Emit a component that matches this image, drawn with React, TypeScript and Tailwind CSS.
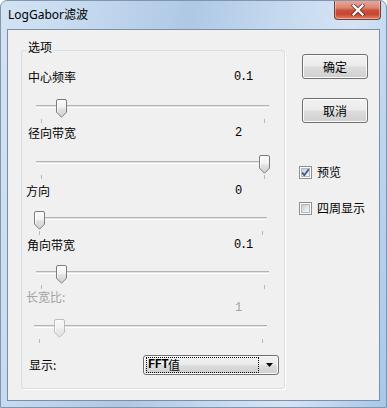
import React from "react";

const CJK = "font-['Noto_Sans_CJK_SC',sans-serif]";
const MONO = "font-['Liberation_Mono',monospace]";

function Thumb({ disabled }: { disabled?: boolean }) {
  const id = disabled ? "thumb-d" : "thumb-n";
  return (
    <svg width="11" height="19" viewBox="0 0 11 19">
      <defs>
        <linearGradient id={id} x1="0" y1="0" x2="0" y2="1">
          <stop offset="0" stopColor={disabled ? "#fafafa" : "#fdfdfd"} />
          <stop offset="0.45" stopColor={disabled ? "#f2f2f2" : "#f1f1f1"} />
          <stop offset="0.55" stopColor={disabled ? "#e9e9e9" : "#e0e0e0"} />
          <stop offset="1" stopColor={disabled ? "#e4e4e4" : "#d3d3d3"} />
        </linearGradient>
      </defs>
      <path
        d="M2 0.5 H9 Q10.5 0.5 10.5 2 V13.2 L5.5 18.2 L0.5 13.2 V2 Q0.5 0.5 2 0.5 Z"
        fill={`url(#${id})`}
        stroke={disabled ? "#bdbdbd" : "#7c7c7c"}
      />
      <path d="M1.5 2 V12.8" stroke="#ffffff" strokeOpacity="0.8" />
    </svg>
  );
}

type Sec = {
  label: string;
  value: string;
  pos: number;
  base: number;
  labelCls: string;
  mtCls: string;
  gapCls: string;
  trackCls: string;
  valueCls: string;
  disabled?: boolean;
};

const sections: Sec[] = [
  { label: "中心频率", value: "0.1", pos: 20 / 223, base: 14, labelCls: "pl-[6px]", mtCls: "mt-[18px]", gapCls: "mt-[14px]", trackCls: "ml-[14px]", valueCls: "" },
  { label: "径向带宽", value: "2", pos: 1, base: 14, labelCls: "pl-[6px]", mtCls: "mt-[2px]", gapCls: "mt-[14px]", trackCls: "ml-[14px]", valueCls: "pl-[1px]" },
  { label: "方向", value: "0", pos: 0, base: 12, labelCls: "pl-[4px]", mtCls: "mt-[4px]", gapCls: "mt-[12px]", trackCls: "ml-[12px]", valueCls: "pl-[1px]" },
  { label: "角向带宽", value: "0.1", pos: 20 / 223, base: 14, labelCls: "pl-[5px]", mtCls: "mt-[2px]", gapCls: "mt-[12px]", trackCls: "ml-[14px]", valueCls: "" },
  { label: "长宽比:", value: "1", pos: 20 / 223, base: 12, labelCls: "pl-[4px]", mtCls: "mt-0", gapCls: "mt-[14px]", trackCls: "ml-[12px]", valueCls: "mt-[11px] pl-[1px]", disabled: true },
];

function SliderSection({ s }: { s: Sec }) {
  const color = s.disabled ? "text-[#a3a3a3]" : "text-black";
  return (
    <div className="flex flex-col">
      <div className={`flex h-[16px] items-start ${s.mtCls} ${color}`}>
        <span className={`w-[212px] text-[12px] leading-[16px] ${CJK} ${s.labelCls}`}>{s.label}</span>
        <span className={`text-[12px] leading-[16px] tracking-[-1.2px] ${MONO} ${s.valueCls}`}>{s.value}</span>
      </div>
      <div className={`relative h-[24px] ${s.gapCls}`}>
        <div className={`mt-[6px] h-[3px] w-[233px] border-t border-b border-t-[#b3b3b3] border-b-white bg-[#e3e3e3] ${s.trackCls}`} />
        <div className="absolute top-0" style={{ left: s.base + Math.round(s.pos * 223) }}>
          <Thumb disabled={s.disabled} />
        </div>
        <div className="absolute top-[20px] h-[4px] w-px bg-[#b9b9b9]" style={{ left: s.base + 5 }} />
        <div className="absolute top-[20px] h-[4px] w-px bg-[#b9b9b9]" style={{ left: s.base + 5 + 223 }} />
      </div>
    </div>
  );
}

function Button({ label, cls }: { label: string; cls: string }) {
  return (
    <div
      className={`ml-[3px] flex h-[25px] w-[66px] items-center justify-center rounded-[3px] border border-[#707070] bg-[linear-gradient(to_bottom,#f2f2f2_0%,#ebebeb_48%,#dddddd_52%,#cfcfcf_100%)] shadow-[inset_0_0_0_1px_#fbfbfb] text-[12px] leading-[16px] text-black ${CJK} ${cls}`}
    >
      {label}
    </div>
  );
}

function Checkbox({ checked, label, cls }: { checked?: boolean; label: string; cls: string }) {
  return (
    <div className={`flex items-center gap-[5px] ${cls}`}>
      <div className="relative flex h-[13px] w-[13px] items-center justify-center border border-[#8e8f8f] bg-white">
        <div className="h-[9px] w-[9px] border border-[#b4b7bb] bg-[linear-gradient(135deg,#c9ccd1_0%,#e4e5e7_55%,#f7f7f7_100%)]" />
        {checked && (
          <svg className="absolute left-[1px] top-[1px]" width="9" height="9" viewBox="0 0 9 9">
            <path d="M1.2 4.6 L3.3 7.2 L7.8 1.2" fill="none" stroke="#3d5796" strokeWidth="1.8" strokeLinejoin="round" />
          </svg>
        )}
      </div>
      <span className={`text-[12px] leading-[16px] text-black ${CJK}`}>{label}</span>
    </div>
  );
}

function CloseButton() {
  return (
    <div className="-mr-px -mt-px flex h-[20px] w-[47px] items-center justify-center rounded-b-[4px] border border-t-0 border-[#7a3d34] bg-[linear-gradient(to_bottom,#e9ab9d_0%,#dc8775_40%,#c9503a_55%,#c7452e_75%,#e0846c_100%)] shadow-[inset_0_0_0_1px_rgba(255,220,210,0.45)]">
      <svg width="14" height="12" viewBox="0 0 14 12">
        <path d="M2.5 1.5 L11.5 10.5 M11.5 1.5 L2.5 10.5" stroke="#5a2a23" strokeWidth="4" strokeLinecap="square" opacity="0.75" />
        <path d="M2.5 1.5 L11.5 10.5 M11.5 1.5 L2.5 10.5" stroke="#ffffff" strokeWidth="2.2" strokeLinecap="square" />
      </svg>
    </div>
  );
}

export default function App() {
  return (
    <div className="flex h-[408px] w-[387px] flex-col overflow-hidden rounded-t-[7px] border border-[#8196ad] bg-[linear-gradient(100deg,#d3e3f4_0%,#c2d7ee_22%,#aec8e5_42%,#c3d8ee_60%,#d5e4f4_78%,#a6c7eb_100%)] px-[6px] pb-[6px]">
      <div className="flex h-[28px] items-start justify-between">
        <span className={`mt-[6px] pl-[1px] text-[12px] leading-[16px] text-black font-['Noto_Sans','Noto_Sans_CJK_SC',sans-serif]`}>
          LogGabor滤波
        </span>
        <CloseButton />
      </div>
      <div className="flex h-[372px] w-[373px] border border-[#7d8fa4] bg-[#f0f0f0]">
        <div className="relative ml-[13px] mt-[20px] flex h-[339px] w-[264px] flex-col rounded-[3px] border border-[#d5dfe5] shadow-[1px_1px_0_#ffffff]">
          <span className={`absolute left-[5px] top-[-12px] bg-[#f0f0f0] px-px text-[12px] leading-[16px] text-black ${CJK}`}>
            选项
          </span>
          {sections.map((s) => (
            <SliderSection key={s.label} s={s} />
          ))}
          <div className="mt-[12px] flex h-[20px] items-center pl-[7px]">
            <span className={`text-[12px] leading-[16px] text-black ${CJK}`}>显示:</span>
            <div className="ml-auto mr-[5px] flex h-[20px] w-[136px] items-center rounded-[3px] border border-[#707070] bg-[linear-gradient(to_bottom,#f2f2f2_0%,#ebebeb_48%,#dddddd_52%,#cfcfcf_100%)] pl-[2px] shadow-[inset_0_0_0_1px_#fbfbfb]">
              <div className="flex h-[16px] w-[113px] items-center border border-dotted border-black pl-px text-[12px] leading-[14px] text-black">
                <span className={`font-bold ${MONO} text-[12px] tracking-[-0.5px]`}>FFT</span>
                <span className={CJK}>值</span>
              </div>
              <svg className="ml-[7px]" width="7" height="4" viewBox="0 0 7 4">
                <path d="M0 0 H7 L3.5 4 Z" fill="#000" />
              </svg>
            </div>
          </div>
        </div>
        <div className="ml-[14px] mt-[24px] flex flex-col">
          <Button label="确定" cls="" />
          <Button label="取消" cls="mt-[19px]" />
          <Checkbox checked label="预览" cls="mt-[41px]" />
          <Checkbox label="四周显示" cls="mt-[20px]" />
        </div>
      </div>
    </div>
  );
}
